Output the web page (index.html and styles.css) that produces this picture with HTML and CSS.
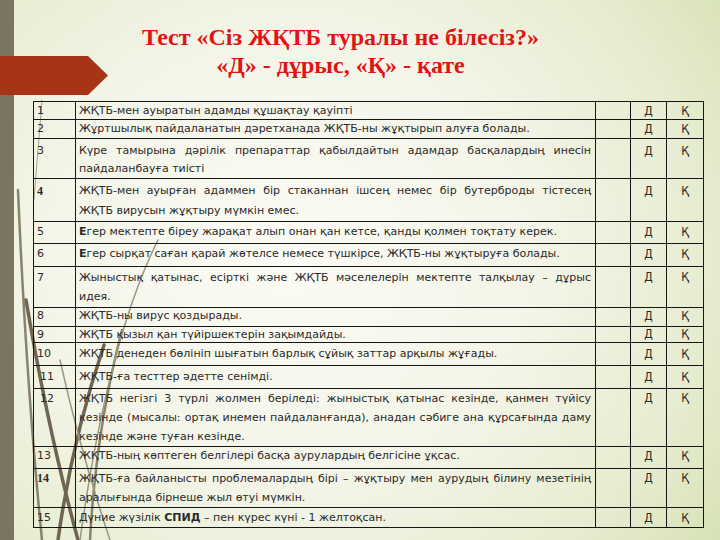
FILE: index.html
```html
<!DOCTYPE html>
<html lang="kk">
<head>
<meta charset="utf-8">
<title>Тест ЖҚТБ</title>
<link rel="stylesheet" href="styles.css">
</head>
<body>
<div class="slide">
  <svg class="wisps" width="720" height="540" viewBox="0 0 720 540" aria-hidden="true">
    <path d="M42 100 Q38 150 34 200" class="w-thin"/>
    <path d="M18 190 Q26 380 42 540" class="w-mid"/>
    <path d="M26 300 Q48 430 78 540" class="w-dark"/>
    <path d="M104 345 Q72 440 58 540" class="w-dark"/>
    <path d="M122 330 Q96 430 90 540" class="w-mid"/>
    <path d="M158 240 Q108 340 80 540" class="w-light"/>
    <path d="M60 360 Q80 450 110 540" class="w-light"/>
  </svg>
  <div class="strip"></div>
  <div class="arrow"></div>
  <main class="content">
    <h1 class="title">
      <span>Тест «Сіз ЖҚТБ туралы не білесіз?»</span>
      <span>«Д» - дұрыс, «Қ» - қате</span>
    </h1>
    <table class="quiz">
      <colgroup>
        <col class="c-num"><col class="c-txt"><col class="c-empty"><col class="c-ans"><col class="c-ans2">
      </colgroup>
      <tr class="q1"><td class="num">1</td><td class="txt">ЖҚТБ-мен ауыратын адамды құшақтау қауіпті</td><td></td><td class="ans">Д</td><td class="ans">Қ</td></tr>
      <tr class="q2"><td class="num">2</td><td class="txt">Жұртшылық пайдаланатын дәретханада ЖҚТБ-ны жұқтырып алуға болады.</td><td></td><td class="ans">Д</td><td class="ans">Қ</td></tr>
      <tr class="q3"><td class="num">3</td><td class="txt"><span class="jl">Күре тамырына дәрілік препараттар қабылдайтын адамдар басқалардың инесін</span><span class="ln">пайдаланбауға тиісті</span></td><td></td><td class="ans">Д</td><td class="ans">Қ</td></tr>
      <tr class="q4"><td class="num bold">4</td><td class="txt"><span class="jl">ЖҚТБ-мен ауырған адаммен бір стаканнан ішсең немес бір бутерброды тістесең</span><span class="ln">ЖҚТБ вирусын жұқтыру мүмкін емес.</span></td><td></td><td class="ans">Д</td><td class="ans">Қ</td></tr>
      <tr class="q5"><td class="num">5</td><td class="txt"><b>Е</b>гер мектепте біреу жарақат алып онан қан кетсе, қанды қолмен тоқтату керек.</td><td></td><td class="ans">Д</td><td class="ans">Қ</td></tr>
      <tr class="q6"><td class="num">6</td><td class="txt"><b>Е</b>гер сырқат саған қарай жөтелсе немесе түшкірсе, ЖҚТБ-ны жұқтыруға болады.</td><td></td><td class="ans">Д</td><td class="ans">Қ</td></tr>
      <tr class="q7"><td class="num">7</td><td class="txt"><span class="jl">Жыныстық қатынас, есірткі және ЖҚТБ мәселелерін мектепте талқылау – дұрыс</span><span class="ln">идея.</span></td><td></td><td class="ans">Д</td><td class="ans">Қ</td></tr>
      <tr class="q8"><td class="num">8</td><td class="txt">ЖҚТБ-ны вирус қоздырады.</td><td></td><td class="ans">Д</td><td class="ans">Қ</td></tr>
      <tr class="q9"><td class="num">9</td><td class="txt">ЖҚТБ қызыл қан түйіршектерін зақымдайды.</td><td></td><td class="ans">Д</td><td class="ans">Қ</td></tr>
      <tr class="q10"><td class="num">10</td><td class="txt">ЖҚТБ денеден бөлініп шығатын барлық сұйық заттар арқылы жұғады.</td><td></td><td class="ans">Д</td><td class="ans">Қ</td></tr>
      <tr class="q11"><td class="num ind">11</td><td class="txt">ЖҚТБ-ға тесттер әдетте сенімді.</td><td></td><td class="ans">Д</td><td class="ans">Қ</td></tr>
      <tr class="q12"><td class="num ind">12</td><td class="txt"><span class="jl">ЖҚТБ негізгі 3 түрлі жолмен беріледі: жыныстық қатынас кезінде, қанмен түйісу</span><span class="jl">кезінде (мысалы: ортақ инемен пайдаланғанда), анадан сәбиге ана құрсағында даму</span><span class="ln">кезінде және туған кезінде.</span></td><td></td><td class="ans">Д</td><td class="ans">Қ</td></tr>
      <tr class="q13"><td class="num">13</td><td class="txt">ЖҚТБ-ның көптеген белгілері басқа аурулардың белгісіне ұқсас.</td><td></td><td class="ans">Д</td><td class="ans">Қ</td></tr>
      <tr class="q14"><td class="num bold">14</td><td class="txt"><span class="jl">ЖҚТБ-ға байланысты проблемалардың бірі – жұқтыру мен аурудың білину мезетінің</span><span class="ln">аралығында бірнеше жыл өтуі мүмкін.</span></td><td></td><td class="ans">Д</td><td class="ans">Қ</td></tr>
      <tr class="q15"><td class="num">15</td><td class="txt">Дүние жүзілік <b>СПИД</b> – пен күрес күні - 1 желтоқсан.</td><td></td><td class="ans">Д</td><td class="ans">Қ</td></tr>
    </table>
  </main>
</div>
</body>
</html>
```
FILE: styles.css
```css
html, body {
  margin: 0;
  padding: 0;
}

body {
  width: 720px;
  height: 540px;
  overflow: hidden;
}

.slide {
  position: relative;
  display: flex;
  width: 720px;
  height: 540px;
  overflow: hidden;
  background: radial-gradient(ellipse 75% 90% at 40% 48%, #fbfbf5 0%, #f4f5e8 45%, #e6ecd0 78%, #d7e1b4 100%);
}

.wisps {
  position: absolute;
  left: 0;
  top: 0;
  z-index: 0;
  fill: none;
  stroke-linecap: round;
}

.w-thin { stroke: #a8a390; stroke-width: 1; }
.w-light { stroke: #9d977f; stroke-width: 1.5; }
.w-mid { stroke: #8a836b; stroke-width: 2.5; }
.w-dark { stroke: #6e6650; stroke-width: 3.5; }

.strip {
  flex: none;
  width: 14px;
  background: #7b7461;
  position: relative;
  z-index: 1;
}

.arrow {
  position: absolute;
  left: 0;
  top: 56px;
  width: 108px;
  height: 39px;
  background: #a83418;
  clip-path: polygon(0 0, 88px 0, 108px 50%, 88px 100%, 0 100%);
  z-index: 3;
}

.content {
  position: relative;
  z-index: 2;
  flex: 1;
  padding: 0 17px 0 19px;
}

.title {
  margin: 0;
  padding: 23px 56px 0 0;
  display: flex;
  flex-direction: column;
  align-items: center;
  font-family: "Liberation Serif", serif;
  font-weight: bold;
  font-size: 24px;
  line-height: 28px;
  color: #e01414;
}

.quiz {
  margin-top: 22px;
  width: 670px;
  table-layout: fixed;
  border-collapse: collapse;
  font-family: "DejaVu Sans", sans-serif;
  font-size: 11px;
  color: #2a2a2a;
}

.c-num { width: 42px; }
.c-txt { width: 520px; }
.c-empty { width: 35px; }
.c-ans { width: 36px; }
.c-ans2 { width: 37px; }

.quiz td {
  border: 1px solid #161616;
  padding: 0 3px;
  vertical-align: top;
  line-height: 16px;
}

.quiz td.txt {
  padding-right: 4px;
}

.num.bold {
  font-family: "Liberation Serif", serif;
  font-weight: bold;
  font-size: 12px;
}

.num.ind {
  padding-left: 6px;
}

.ans {
  text-align: center;
  font-family: "DejaVu Sans Condensed", "Liberation Sans Narrow", "Liberation Sans", sans-serif;
  font-size: 12px;
}

.jl, .ln {
  display: block;
}

.jl {
  text-align: justify;
  text-align-last: justify;
}

.q1 td { height: 16px; padding-top: 1px; }
.q2 td { height: 17px; padding-top: 1px; }
.q3 td { height: 36px; padding-top: 3px; line-height: 18px; }
.q4 td { height: 40px; padding-top: 2px; line-height: 20px; }
.q5 td { height: 19px; padding-top: 2px; }
.q6 td { height: 20px; padding-top: 2px; }
.q7 td { height: 39px; padding-top: 1px; line-height: 19px; }
.q8 td { height: 18px; }
.q9 td { height: 15px; line-height: 15px; }
.q10 td { height: 19px; padding-top: 3px; }
.q11 td { height: 19px; padding-top: 3px; }
.q12 td { height: 57px; line-height: 19px; }
.q13 td { height: 20px; padding-top: 1px; }
.q14 td { height: 38px; line-height: 19px; }
.q15 td { height: 17px; padding-top: 2px; }
```
